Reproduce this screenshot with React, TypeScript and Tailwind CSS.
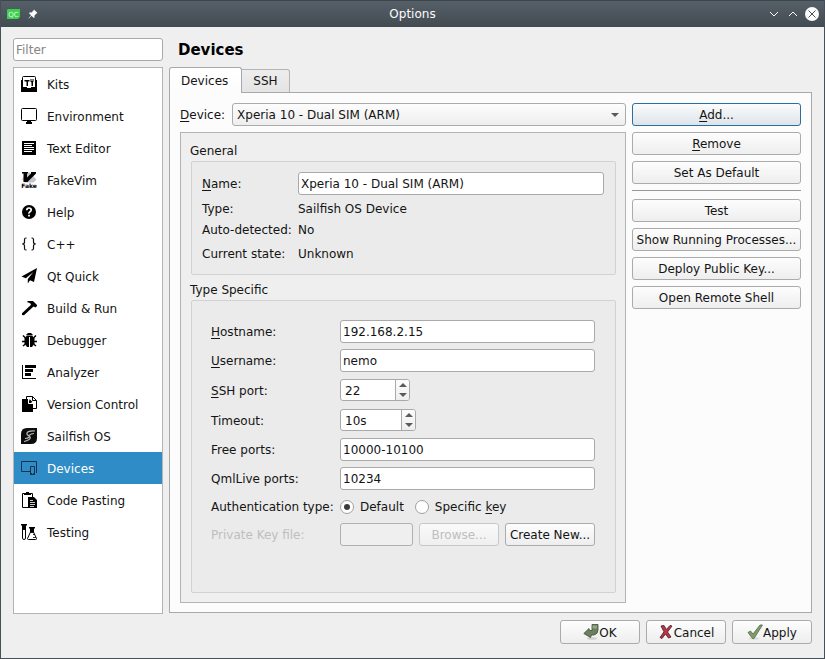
import { useState } from "react";
import type { ReactNode } from "react";

const ICON = "size-4 shrink-0";

const KitsIcon = () => (
  <svg viewBox="0 0 16 16" className={ICON} aria-hidden="true">
    <path d="M1.500 11V1.500Q1.500 0.500 2.500 0.500H13.500Q14.500 0.500 14.500 1.500V11M0.500 4V11M15.500 4V11" fill="none" stroke="#000" />
    <path d="M0 11h6v1h4v-1h6v5H0z" />
    <path d="M3.500 4h5v1.500H7V10H5.500V5.500h-2zM9.500 3h1v2h1V3h1v2.500l-.5 1V10h-1.500V6.500l-1-1z" />
  </svg>
);

const MonitorIcon = () => (
  <svg viewBox="0 0 16 16" className={ICON} aria-hidden="true">
    <rect x="0.500" y="0.500" width="15" height="12" rx="1" fill="none" stroke="#000" />
    <path d="M6 13h4v1h1v2H5v-2h1z" />
  </svg>
);

const TextIcon = () => (
  <svg viewBox="0 0 16 16" className={ICON} aria-hidden="true">
    <path d="M1 1h14v14H1z" />
    <path d="M3 3.500h10M3 5.500h8M3 7.500h10M3 9.500h10M3 11.500h8" stroke="#fff" />
  </svg>
);

const VimIcon = () => (
  <svg viewBox="0 0 16 16" className={ICON} aria-hidden="true">
    <path d="M8 0l7.500 7.500-3 3H4L1 7z" fill="#c4c4c4" />
    <path d="M1 0h6v1.500H6V5.500l4-4V0h5v1.500L6.500 10H2.500V1.500H1z" />
    <text x="8" y="15.500" textAnchor="middle" fontSize="6" fontWeight="bold" fontFamily="DejaVu Sans, sans-serif">Fake</text>
  </svg>
);

const HelpIcon = () => (
  <svg viewBox="0 0 16 16" className={ICON} aria-hidden="true">
    <circle cx="8" cy="8" r="7" />
    <path d="M5.800 6.200Q5.800 4 8 4T10.200 6Q10.200 7 9 7.700T8 9.600" fill="none" stroke="#fff" strokeWidth="1.700" />
    <path d="M7.100 10.700h1.800v1.800H7.100z" fill="#fff" />
  </svg>
);

const BracesIcon = () => (
  <svg viewBox="0 0 16 16" className={ICON} aria-hidden="true">
    <path
      d="M5.500 2H5Q3.500 2 3.500 3.500V6Q3.500 8 1.200 8Q3.500 8 3.500 10V12.500Q3.500 14 5 14H5.500M10.500 2H11Q12.500 2 12.500 3.500V6Q12.500 8 14.800 8Q12.500 8 12.500 10V12.500Q12.500 14 11 14H10.500"
      fill="none"
      stroke="#111"
      strokeWidth="1.200"
    />
  </svg>
);

const PlaneIcon = () => (
  <svg viewBox="0 0 16 16" className={ICON} aria-hidden="true">
    <path d="M16 0L0.500 8.500L4.800 10.300L12.500 4L6.800 11V15.500L9 12.200L13 14z" />
  </svg>
);

const HammerIcon = () => (
  <svg viewBox="0 0 16 16" className={ICON} aria-hidden="true">
    <path d="M6.500 1H12L16 5V6L14.500 7.500L12.500 6.500L3 15.300L1 15V13.300L9.800 5V3.800L7.500 2.500H6.500z" />
  </svg>
);

const BugIcon = () => (
  <svg viewBox="0 0 16 16" className={ICON} aria-hidden="true">
    <path d="M5.500 3.500V2.500L7 1H10L11.500 2.500V3.500z" />
    <path d="M5.500 4H11.500L13.500 6.500V11.500L11 15H6L3.500 11.500V6.500z" />
    <path d="M8.500 5V15" stroke="#fff" />
    <path d="M2 3.500L4.500 6M1 9.500H4M2 14L4.500 12M15 3.500L12.500 6M16 9.500H13M15 14L12.500 12" fill="none" stroke="#000" strokeWidth="1.400" />
  </svg>
);

const AnalyzerIcon = () => (
  <svg viewBox="0 0 16 16" className={ICON} aria-hidden="true">
    <path d="M1 1h1v13h13v1H1zM4 1h11v3H4zM4 5h8v3H4zM4 9h6v3H4z" />
  </svg>
);

const VersionIcon = () => (
  <svg viewBox="0 0 16 16" className={ICON} aria-hidden="true">
    <path d="M5.500 3V0.500H11.500L15.500 4.500V12.500H12M11.500 0.500V4.500H15.500" fill="none" stroke="#000" />
    <path d="M1 3h6l5 5v8H1z" />
    <path d="M7.500 3v4.500H12" fill="none" stroke="#fff" />
    <path d="M8.500 3l3 3h-3z" />
  </svg>
);

const SailfishIcon = () => (
  <svg viewBox="0 0 16 16" className={ICON} aria-hidden="true">
    <path d="M6 0h10v10q0 6-6 6H0V6Q0 0 6 0z" fill="#0c0c0c" />
    <path d="M14 3Q7.500 2.500 6 5Q5.500 7 8 8Q10.500 9.500 8 11.500Q6 13 3 13.500M8 7.500Q10 5.500 13 5.500M4 10.500Q6.500 10.500 8.500 9" fill="none" stroke="#b8b8b8" strokeWidth="1.200" />
  </svg>
);

const DevicesIcon = () => (
  <svg viewBox="0 0 16 16" className={ICON} aria-hidden="true">
    <path d="M9 11.500H0.500V1.500H15.500V13M9.500 6.500h4v8h-4z" fill="none" stroke="#17324a" />
    <path d="M9 13h5v2H9z" fill="#17324a" />
    <path d="M11 13h1v1h-1z" fill="#308cc6" />
  </svg>
);

const PasteIcon = () => (
  <svg viewBox="0 0 16 16" className={ICON} aria-hidden="true">
    <path d="M1.500 1.500h10v14h-10z" fill="#fff" stroke="#000" />
    <path d="M3 1h2V0h3v1h2v2H3zM7 5h6l3 3v8H7z" />
    <path d="M9 8.500h3M9 10.500h5M9 12.500h5M9 14.500h4" stroke="#fff" strokeWidth="0.800" />
  </svg>
);

const TestingIcon = () => (
  <svg viewBox="0 0 16 16" className={ICON} aria-hidden="true">
    <path d="M0 0h6v1.500H5V6H1V1.500H0zM8 3h6v1.500h-1V6H9V4.500H8z" />
    <path d="M1.500 5v9q0 1.500 1.500 1.500t1.500-1.500V5M9.500 5v3L6.500 14.500Q6.300 15.500 7.500 15.500h7Q15.800 15.500 15.500 14.500L12.500 8V5" fill="none" stroke="#000" />
    <path d="M9.500 5h3v3.500h-3zM12 10.500h2M12 13.500h3" stroke="#000" strokeWidth="0.800" />
  </svg>
);

const PAGES: { name: string; icon: () => ReactNode }[] = [
  { name: "Kits", icon: KitsIcon },
  { name: "Environment", icon: MonitorIcon },
  { name: "Text Editor", icon: TextIcon },
  { name: "FakeVim", icon: VimIcon },
  { name: "Help", icon: HelpIcon },
  { name: "C++", icon: BracesIcon },
  { name: "Qt Quick", icon: PlaneIcon },
  { name: "Build & Run", icon: HammerIcon },
  { name: "Debugger", icon: BugIcon },
  { name: "Analyzer", icon: AnalyzerIcon },
  { name: "Version Control", icon: VersionIcon },
  { name: "Sailfish OS", icon: SailfishIcon },
  { name: "Devices", icon: DevicesIcon },
  { name: "Code Pasting", icon: PasteIcon },
  { name: "Testing", icon: TestingIcon },
];

const FIELD = "h-[23px] min-w-0 rounded-[3px] border border-[#a9a9a9] bg-white px-0.5 outline-none";
const BUTTON = "h-[23px] whitespace-nowrap rounded-[3px] border bg-linear-to-b";
const NORMAL = "border-[#ababab] from-[#fdfdfd] to-[#eeeeee]";

/* Underlined mnemonic letter */
const Key = ({ children }: { children: string }) => (
  <span className="underline decoration-1 underline-offset-2">{children}</span>
);

function SideButton({ children, primary = false }: { children: ReactNode; primary?: boolean }) {
  return (
    <button
      type="button"
      className={`${BUTTON} w-full ${primary ? "border-[#2a6f9f] from-[#fbfcfd] to-[#dde4ea]" : NORMAL}`}
    >
      {children}
    </button>
  );
}

function SpinBox({ id, initial, suffix, width }: { id: string; initial: number; suffix: string; width: string }) {
  const [value, setValue] = useState(initial);
  return (
    <div className={`flex h-[22px] overflow-hidden rounded-[3px] border border-[#a9a9a9] bg-white ${width}`}>
      <input
        id={id}
        className="w-0 min-w-0 flex-1 bg-transparent px-1 pt-0.5 outline-none"
        value={`${value}${suffix}`}
        onChange={(e) => setValue(parseInt(e.target.value, 10) || 0)}
      />
      <div className="flex w-3.5 flex-col border-l border-[#a9a9a9] bg-linear-to-b from-[#fcfcfc] to-[#eeeeee]">
        <button type="button" aria-label="Increase" className="flex flex-1 items-center justify-center" onClick={() => setValue(value + 1)}>
          <svg viewBox="0 0 8 4" className="h-1 w-2"><path d="M0 4L4 0l4 4z" fill="#5a5a5a" /></svg>
        </button>
        <button type="button" aria-label="Decrease" className="flex flex-1 items-center justify-center" onClick={() => setValue(value - 1)}>
          <svg viewBox="0 0 8 4" className="h-1 w-2"><path d="M0 0l4 4 4-4z" fill="#5a5a5a" /></svg>
        </button>
      </div>
    </div>
  );
}

const RADIO =
  "grid size-3.5 shrink-0 appearance-none place-items-center rounded-full border border-[#a0a0a0] bg-white before:size-1.5 before:rounded-full checked:before:bg-[#3c3c3c]";

function DialogButton({ children, icon }: { children: string; icon: ReactNode }) {
  return (
    <button type="button" className={`flex h-6 w-20 items-center justify-center rounded-[3px] border bg-linear-to-b ${NORMAL}`}>
      {icon}
      <span className="pt-0.5">{children}</span>
    </button>
  );
}

export default function App() {
  const [page, setPage] = useState("Devices");
  return (
    <div className="flex min-h-screen flex-col border-x border-b border-[#475057] bg-[#efefef] font-['DejaVu_Sans',sans-serif] text-[12px] leading-4 text-[#141414]">
      <header className="grid h-[27px] grid-cols-[1fr_auto_1fr] items-center border-t border-[#3d464c] bg-linear-to-b from-[#566068] to-[#434b52] px-[3px] text-[#fcfcfc]">
        <div className="flex items-center gap-2 pl-0.5">
          <svg viewBox="0 0 14 12" className="h-3 w-3.5" aria-hidden="true">
            <path d="M2 1h12v8l-2 2H1V2z" fill="#41cd52" />
            <text x="7.500" y="8.500" textAnchor="middle" fontSize="7" fill="#d6ffdb" fontFamily="DejaVu Sans, sans-serif">QC</text>
          </svg>
          <svg viewBox="0 0 10 10" className="size-2.5" aria-hidden="true">
            <path d="M6 0.500L9.500 4L8.500 4.500L6.500 6.500V8.500L5.800 9L3.500 6.700L0.800 9.500L0.500 9.200L3 6.300L1 4.200L1.500 3.500H3.500L5.500 1.500z" fill="#fcfcfc" />
          </svg>
        </div>
        <h1>Options</h1>
        <div className="flex items-center justify-end">
          <button type="button" aria-label="Minimize" className="flex w-[19px] justify-center">
            <svg viewBox="0 0 10 6" className="h-1.5 w-2.5"><path d="M1 1l4 4 4-4" fill="none" stroke="#fcfcfc" /></svg>
          </button>
          <button type="button" aria-label="Maximize" className="flex w-[19px] justify-center">
            <svg viewBox="0 0 10 6" className="h-1.5 w-2.5"><path d="M1 5l4-4 4 4" fill="none" stroke="#fcfcfc" /></svg>
          </button>
          <button type="button" aria-label="Close" className="flex w-[19px] justify-center">
            <svg viewBox="0 0 14 14" className="size-3.5">
              <circle cx="7" cy="7" r="7" fill="#fcfcfc" />
              <path d="M3.500 3.500l7 7M10.500 3.500l-7 7" stroke="#474f56" />
            </svg>
          </button>
        </div>
      </header>

      <div className="flex flex-1 flex-col px-3 pt-[11px] pb-3.5">
        <div className="flex flex-1 gap-1.5">
          <aside className="flex w-[150px] shrink-0 flex-col gap-1.5">
            <input aria-label="Filter" placeholder="Filter" className={`${FIELD} placeholder:text-[#868686]`} />
            <nav aria-label="Categories" className="flex-1 border border-[#b4b4b4] bg-white">
              {PAGES.map(({ name, icon: Icon }) => (
                <button
                  key={name}
                  type="button"
                  onClick={() => setPage(name)}
                  className={`flex h-8 w-full items-center gap-2.5 px-[7px] text-left ${page === name ? "bg-[#308cc6] text-white" : ""}`}
                >
                  <Icon />
                  <span className="pt-0.5">{name}</span>
                </button>
              ))}
            </nav>
          </aside>

          <main className="flex min-w-0 flex-1 flex-col pb-px">
            <h2 className="h-[29px] px-[9px] text-[15px] leading-[25px] font-bold text-black">Devices</h2>
            <div role="tablist" className="flex h-[26px] items-end">
              <button type="button" role="tab" aria-selected="true" className="z-10 h-[26px] rounded-t-[3px] border border-b-0 border-[#a9a9a9] bg-linear-to-b from-white to-[#fcfcfc] pr-[13px] pl-[11px]">
                Devices
              </button>
              <button type="button" role="tab" aria-selected="false" className="h-6 rounded-tr-[3px] border border-l-0 border-[#b4b4b4] bg-linear-to-b from-[#ededed] to-[#e4e4e4] px-[11px]">
                SSH
              </button>
            </div>

            <div role="tabpanel" className="-mt-px flex flex-1 gap-1.5 border border-[#a9a9a9] bg-[#fcfcfc] px-2.5 pt-2.5 pb-[9px]">
              <div className="flex min-w-0 flex-1 flex-col gap-1.5">
                <div className="flex items-center gap-[7px]">
                  <label htmlFor="device" className="whitespace-nowrap"><Key>D</Key>evice:</label>
                  <div className="relative flex-1">
                    <select id="device" className={`${BUTTON} ${NORMAL} block w-full appearance-none px-1`}>
                      <option>Xperia 10 - Dual SIM (ARM)</option>
                    </select>
                    <svg viewBox="0 0 8 4" className="pointer-events-none absolute top-2.5 right-[7px] h-1 w-2" aria-hidden="true">
                      <path d="M0 0l4 4 4-4z" fill="#5a5a5a" />
                    </svg>
                  </div>
                </div>

                <div className="flex flex-1 flex-col border border-[#b4b4b4] bg-[#efefef] px-[9px] pt-2.5 pb-[9px]">
                  <h3>General</h3>
                  <div className="mt-0.5 ml-px grid grid-cols-[90px_1fr] grid-rows-[23px_15px_15px_21px] items-center gap-1.5 rounded-[2px] border border-[#d2d2d2] bg-[#ebebeb] py-2.5 pr-[11px] pl-2.5">
                    <label htmlFor="name"><Key>N</Key>ame:</label>
                    <input id="name" className={FIELD} defaultValue="Xperia 10 - Dual SIM (ARM)" />
                    <span>Type:</span>
                    <span>Sailfish OS Device</span>
                    <span className="whitespace-nowrap">Auto-detected:</span>
                    <span>No</span>
                    <span>Current state:</span>
                    <span>Unknown</span>
                  </div>

                  <h3 className="mt-[7px]">Type Specific</h3>
                  <div className="mt-0.5 ml-px grid flex-1 grid-cols-[123px_1fr] grid-rows-[23px_23px_24px_24px_23px_23px_21px_23px] content-start items-center gap-1.5 rounded-[2px] border border-[#d2d2d2] bg-[#ebebeb] py-[19px] pr-5 pl-[19px]">
                    <label htmlFor="host"><Key>H</Key>ostname:</label>
                    <input id="host" className={FIELD} defaultValue="192.168.2.15" />
                    <label htmlFor="user"><Key>U</Key>sername:</label>
                    <input id="user" className={FIELD} defaultValue="nemo" />
                    <label htmlFor="ssh" className="pt-0.5"><Key>S</Key>SH port:</label>
                    <SpinBox id="ssh" initial={22} suffix="" width="w-[70px]" />
                    <label htmlFor="timeout" className="pt-0.5">Timeout:</label>
                    <SpinBox id="timeout" initial={10} suffix="s" width="w-[76px]" />
                    <label htmlFor="free">Free ports:</label>
                    <input id="free" className={FIELD} defaultValue="10000-10100" />
                    <label htmlFor="qml">QmlLive ports:</label>
                    <input id="qml" className={FIELD} defaultValue="10234" />
                    <span id="auth" className="whitespace-nowrap">Authentication type:</span>
                    <div role="radiogroup" aria-labelledby="auth" className="flex items-center gap-[11px]">
                      <label className="flex items-center gap-1.5">
                        <input type="radio" name="auth" defaultChecked className={RADIO} />
                        Default
                      </label>
                      <label className="flex items-center gap-1.5">
                        <input type="radio" name="auth" className={RADIO} />
                        <span>Specific <Key>k</Key>ey</span>
                      </label>
                    </div>
                    <label htmlFor="keyfile" className="text-[#bebebe]">Private Key file:</label>
                    <div className="flex gap-1.5">
                      <input id="keyfile" disabled className="h-[23px] w-0 min-w-0 flex-1 rounded-[3px] border border-[#b0b0b0] bg-[#efefef]" />
                      <button type="button" disabled className={`${BUTTON} w-20 border-[#c8c8c8] from-[#fafafa] to-[#efefef] text-[#bebebe]`}>Browse...</button>
                      <button type="button" className={`${BUTTON} ${NORMAL} w-[90px]`}>Create New...</button>
                    </div>
                  </div>
                </div>
              </div>

              <div className="flex w-[169px] shrink-0 flex-col gap-1.5">
                <SideButton primary><Key>A</Key>dd...</SideButton>
                <SideButton><Key>R</Key>emove</SideButton>
                <SideButton>Set As Default</SideButton>
                <hr className="mb-0.5 border-[#989898]" />
                <SideButton>Test</SideButton>
                <SideButton>Show Running Processes...</SideButton>
                <SideButton>Deploy Public Key...</SideButton>
                <SideButton>Open Remote Shell</SideButton>
              </div>
            </div>
          </main>
        </div>

        <footer className="mt-1.5 flex justify-end gap-1.5">
          <DialogButton
            icon={
              <svg viewBox="0 0 16 16" className={ICON} aria-hidden="true">
                <ellipse cx="9" cy="14.500" rx="5" ry="1.200" fill="#cfcfcf" />
                <path d="M9 0.500H15V6Q15 10 11 11H8.500L7.500 13.500L0.800 9.500L6 4.500L6.500 6.500H9z" fill="#6b8060" stroke="#3f4d38" strokeWidth="0.800" />
                <path d="M9.500 1.500H14V4.500H9.500z" fill="#93a688" />
              </svg>
            }
          >
            OK
          </DialogButton>
          <DialogButton
            icon={
              <svg viewBox="0 0 16 16" className={ICON} aria-hidden="true">
                <path d="M3 2L6 1.500L8.300 5.500L12 1.500L14 2L9.500 8L13 13L10.500 14L7.500 10L4 14.500L2 13.500L6 7.800z" fill="#b8384a" stroke="#5c2029" strokeWidth="0.900" />
              </svg>
            }
          >
            Cancel
          </DialogButton>
          <DialogButton
            icon={
              <svg viewBox="0 0 16 16" className={ICON} aria-hidden="true">
                <ellipse cx="7" cy="14.500" rx="5" ry="1" fill="#d6d6d6" />
                <path d="M1 8.500L3.500 7L6 10L13 1L15.500 1L7 14.500H5.500z" fill="#7f9b6b" stroke="#566b48" strokeWidth="0.800" />
              </svg>
            }
          >
            Apply
          </DialogButton>
        </footer>
      </div>
    </div>
  );
}
